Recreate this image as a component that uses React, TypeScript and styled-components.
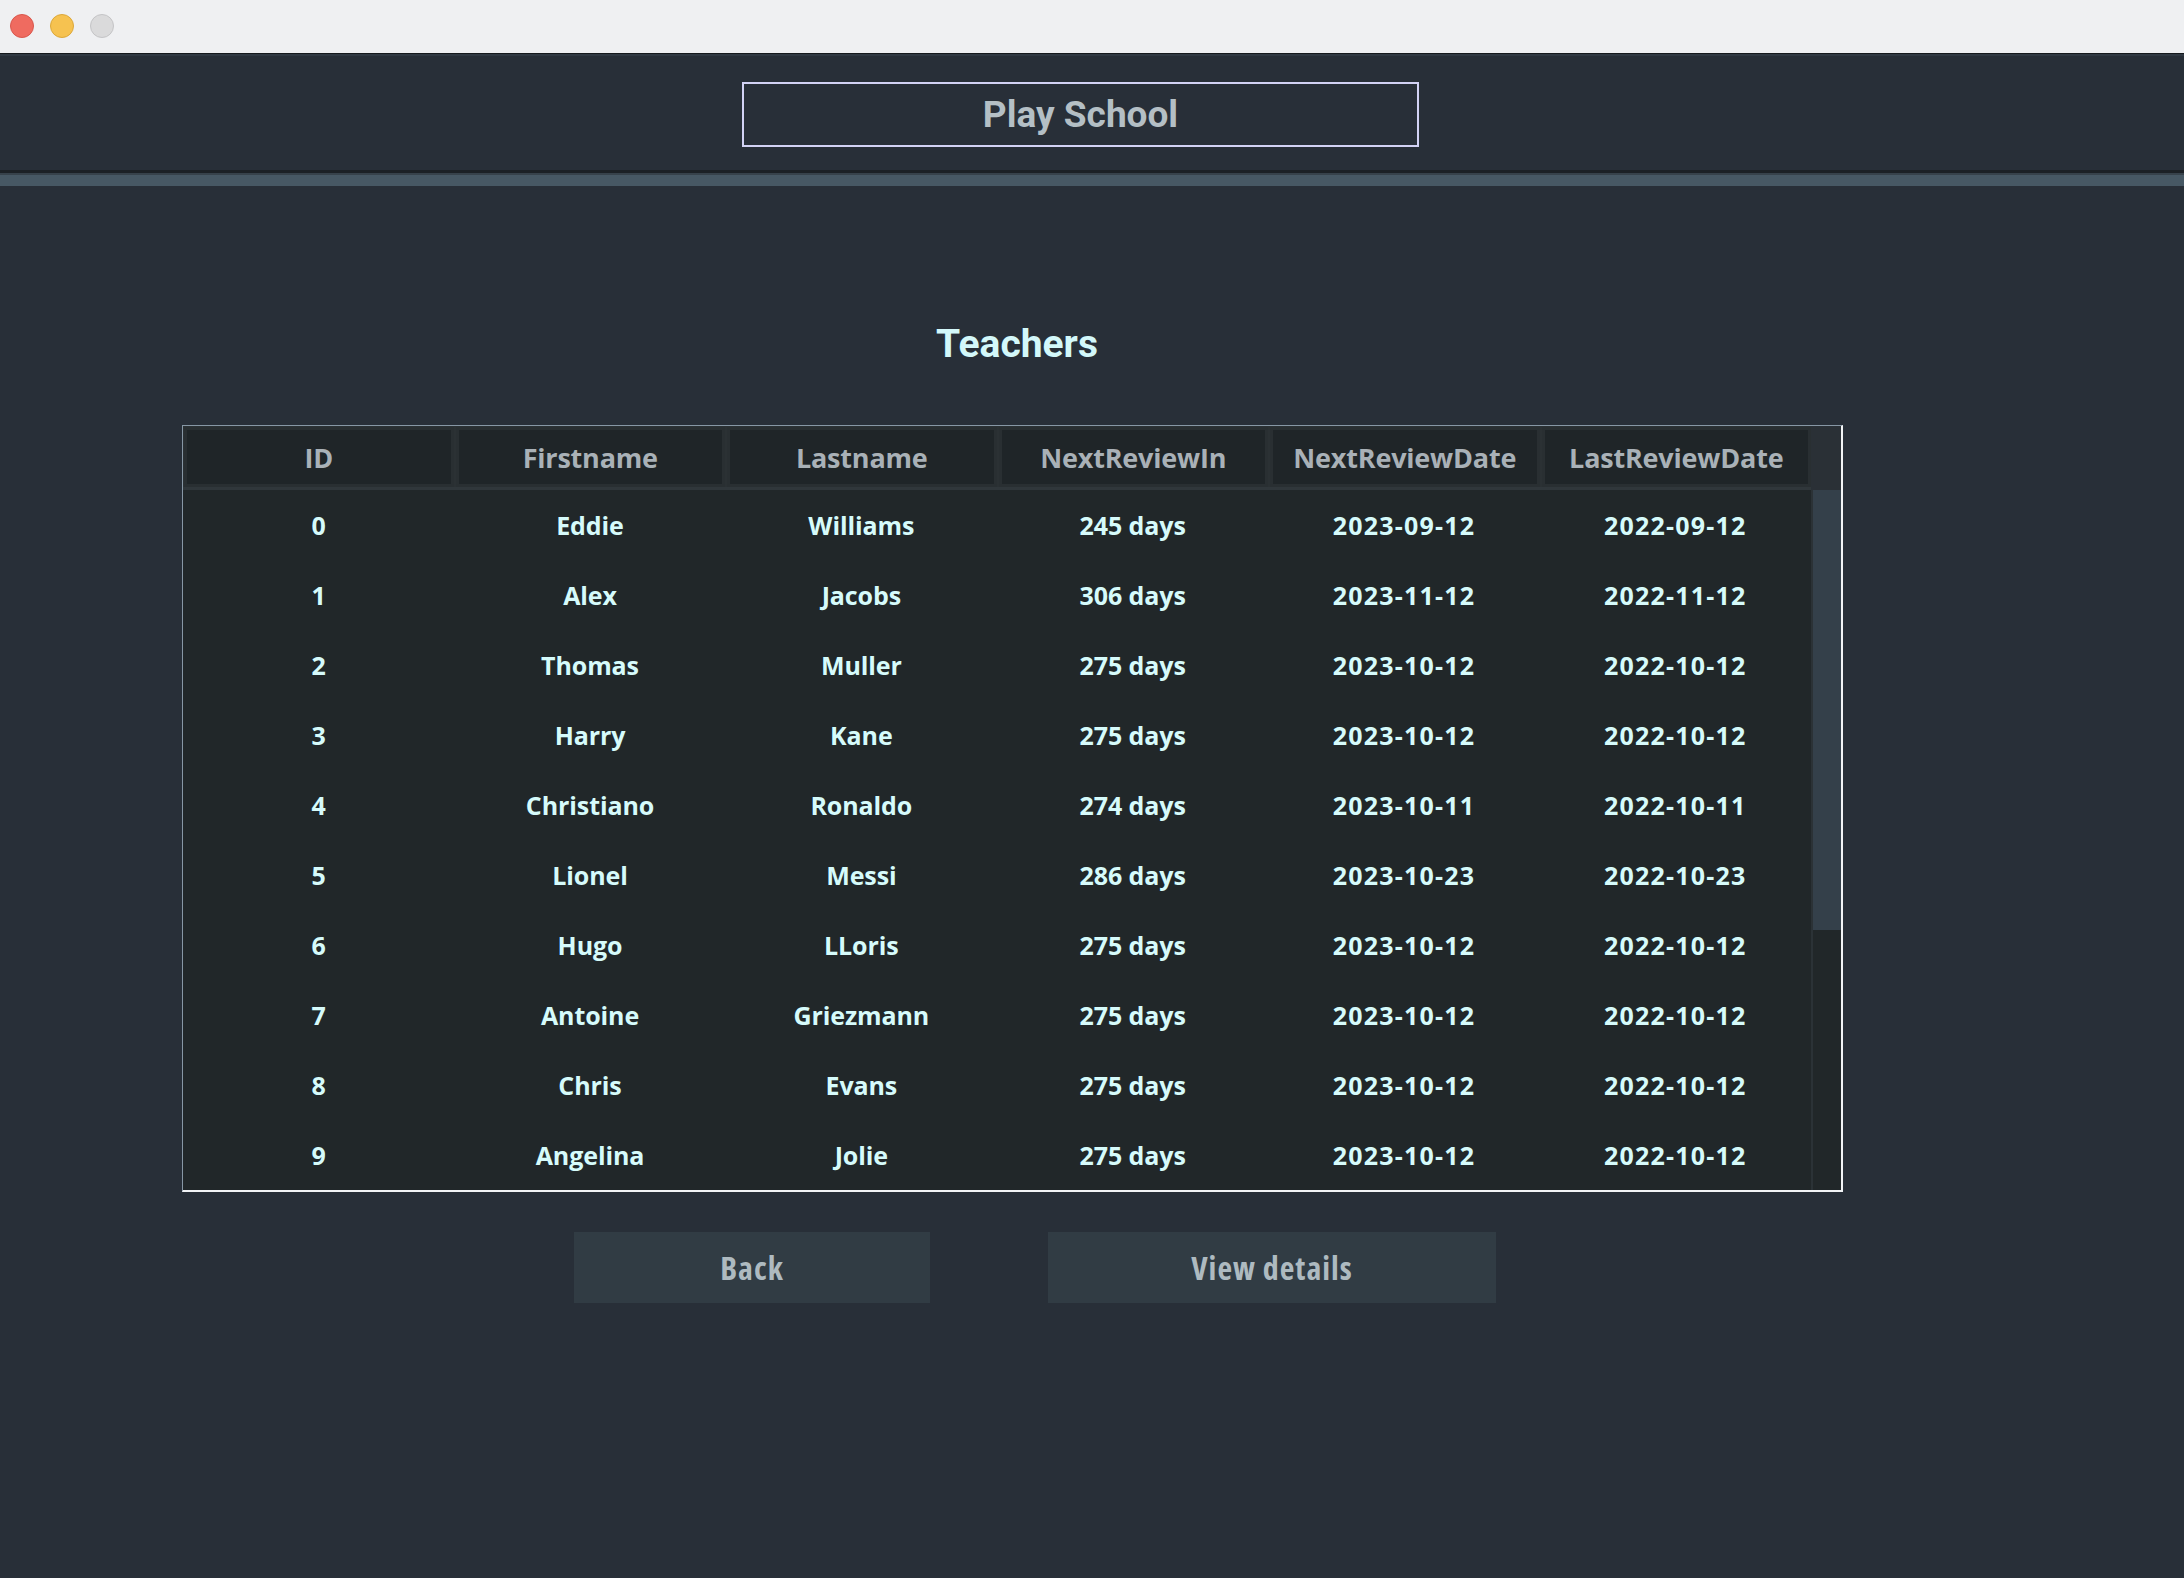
import React from "react";
import styled, { createGlobalStyle } from "styled-components";

const Global = createGlobalStyle`
  html, body { margin: 0; padding: 0; background: #282f38; }
  #root { min-height: 100vh; }
  * { box-sizing: border-box; }
`;

const Window = styled.div`
  min-height: 100vh;
  background: #282f38;
  display: flex;
  flex-direction: column;
`;

const TitleBar = styled.div`
  height: 54px;
  background: #eff0f2;
  border-bottom: 1px solid #15191d;
  display: flex;
  align-items: center;
  gap: 16px;
  padding-left: 10px;
  padding-bottom: 2px;
`;

const Light = styled.span<{ $bg: string; $edge: string }>`
  width: 24px;
  height: 24px;
  border-radius: 50%;
  background: ${(p) => p.$bg};
  border: 1px solid ${(p) => p.$edge};
`;

const Header = styled.header`
  display: flex;
  padding: 26px 0 23px 742px;
  border-top: 2px solid #303943;
  border-bottom: 3px solid #1c2126;
`;

const BrandBox = styled.div`
  width: 677px;
  height: 65px;
  border: 2px solid #d2d2f4;
  display: flex;
  align-items: center;
  justify-content: center;
  font-family: Roboto, "Liberation Sans", sans-serif;
  font-weight: 700;
  font-size: 37px;
  color: #b4bfc5;
`;

const Rule = styled.div`
  height: 13px;
  background: #475864;
  border-top: 2px solid #37424b;
`;

const Main = styled.main`
  display: flex;
  flex-direction: column;
  padding-left: 182px;
`;

const Heading = styled.h1`
  width: 1661px;
  margin: 139px 0 61px;
  padding-left: 9px;
  text-align: center;
  font-family: Roboto, "Liberation Sans", sans-serif;
  font-weight: 700;
  font-size: 39px;
  line-height: 39px;
  color: #d3f8fa;
`;

const TableFrame = styled.div`
  width: 1661px;
  display: flex;
  border-top: 1px solid #8797a5;
  border-left: 1px solid #8797a5;
  border-right: 2px solid #f2f4f6;
  border-bottom: 2px solid #f2f4f6;
  background: #212729;
`;

const Grid = styled.div`
  width: 1628px;
  display: flex;
  flex-direction: column;
`;

const HeadRow = styled.div`
  display: grid;
  grid-template-columns: repeat(6, 1fr);
  height: 64px;
  padding-top: 1px;
  background: #2b3134;
  border-bottom: 3px solid #30373b;
  gap: 0 2px;
  padding-left: 1px;
`;

const HeadCell = styled.div`
  background: #1f2528;
  border: 3px solid #292f32;
  display: flex;
  align-items: center;
  justify-content: center;
  font-family: "Open Sans", "Noto Sans", sans-serif;
  font-weight: 700;
  font-size: 27px;
  color: #a9b1b7;
  letter-spacing: -0.2px;
`;

const Row = styled.div`
  display: grid;
  grid-template-columns: repeat(6, 1fr);
  height: 70px;
`;

const Cell = styled.div<{ $date?: boolean }>`
  display: flex;
  align-items: center;
  justify-content: center;
  font-family: "Open Sans", "Noto Sans", sans-serif;
  font-weight: 700;
  font-size: 25px;
  color: #d6fbfb;
  letter-spacing: ${(p) => (p.$date ? "1.2px" : "-0.1px")};
`;

const ScrollCol = styled.div`
  flex: 1;
  display: flex;
  flex-direction: column;
`;

const ScrollCorner = styled.div`
  height: 64px;
  background: #2a3036;
`;

const Track = styled.div`
  flex: 1;
  display: flex;
  flex-direction: column;
  border-left: 2px solid #2b3236;
  background: #212729;
`;

const Thumb = styled.div`
  height: 440px;
  background: #34404a;
`;

const Buttons = styled.div`
  display: flex;
  gap: 118px;
  margin-top: 40px;
  padding-left: 392px;
`;

const Button = styled.button<{ $w: number }>`
  width: ${(p) => p.$w}px;
  height: 71px;
  border: none;
  background: #313c44;
  color: #aebac0;
  font-family: "Open Sans", "Noto Sans", sans-serif;
  font-weight: 700;
  font-size: 32px;
  letter-spacing: 1px;
  font-stretch: 75%;
  cursor: pointer;
`;

const columns = ["ID", "Firstname", "Lastname", "NextReviewIn", "NextReviewDate", "LastReviewDate"];

const rows: string[][] = [
  ["0", "Eddie", "Williams", "245 days", "2023-09-12", "2022-09-12"],
  ["1", "Alex", "Jacobs", "306 days", "2023-11-12", "2022-11-12"],
  ["2", "Thomas", "Muller", "275 days", "2023-10-12", "2022-10-12"],
  ["3", "Harry", "Kane", "275 days", "2023-10-12", "2022-10-12"],
  ["4", "Christiano", "Ronaldo", "274 days", "2023-10-11", "2022-10-11"],
  ["5", "Lionel", "Messi", "286 days", "2023-10-23", "2022-10-23"],
  ["6", "Hugo", "LLoris", "275 days", "2023-10-12", "2022-10-12"],
  ["7", "Antoine", "Griezmann", "275 days", "2023-10-12", "2022-10-12"],
  ["8", "Chris", "Evans", "275 days", "2023-10-12", "2022-10-12"],
  ["9", "Angelina", "Jolie", "275 days", "2023-10-12", "2022-10-12"],
];

export default function App() {
  return (
    <Window>
      <Global />
      <TitleBar>
        <Light $bg="#ef6b60" $edge="#d9574d" />
        <Light $bg="#f6c250" $edge="#dca83a" />
        <Light $bg="#dadadb" $edge="#c4c4c6" />
      </TitleBar>
      <Header>
        <BrandBox>Play School</BrandBox>
      </Header>
      <Rule />
      <Main>
        <Heading>Teachers</Heading>
        <TableFrame>
          <Grid>
            <HeadRow>
              {columns.map((c) => (
                <HeadCell key={c}>{c}</HeadCell>
              ))}
            </HeadRow>
            {rows.map((r) => (
              <Row key={r[0]}>
                {r.map((v, i) => (
                  <Cell key={i} $date={i >= 4}>
                    {v}
                  </Cell>
                ))}
              </Row>
            ))}
          </Grid>
          <ScrollCol>
            <ScrollCorner />
            <Track>
              <Thumb />
            </Track>
          </ScrollCol>
        </TableFrame>
        <Buttons>
          <Button $w={356}>Back</Button>
          <Button $w={448}>View details</Button>
        </Buttons>
      </Main>
    </Window>
  );
}
